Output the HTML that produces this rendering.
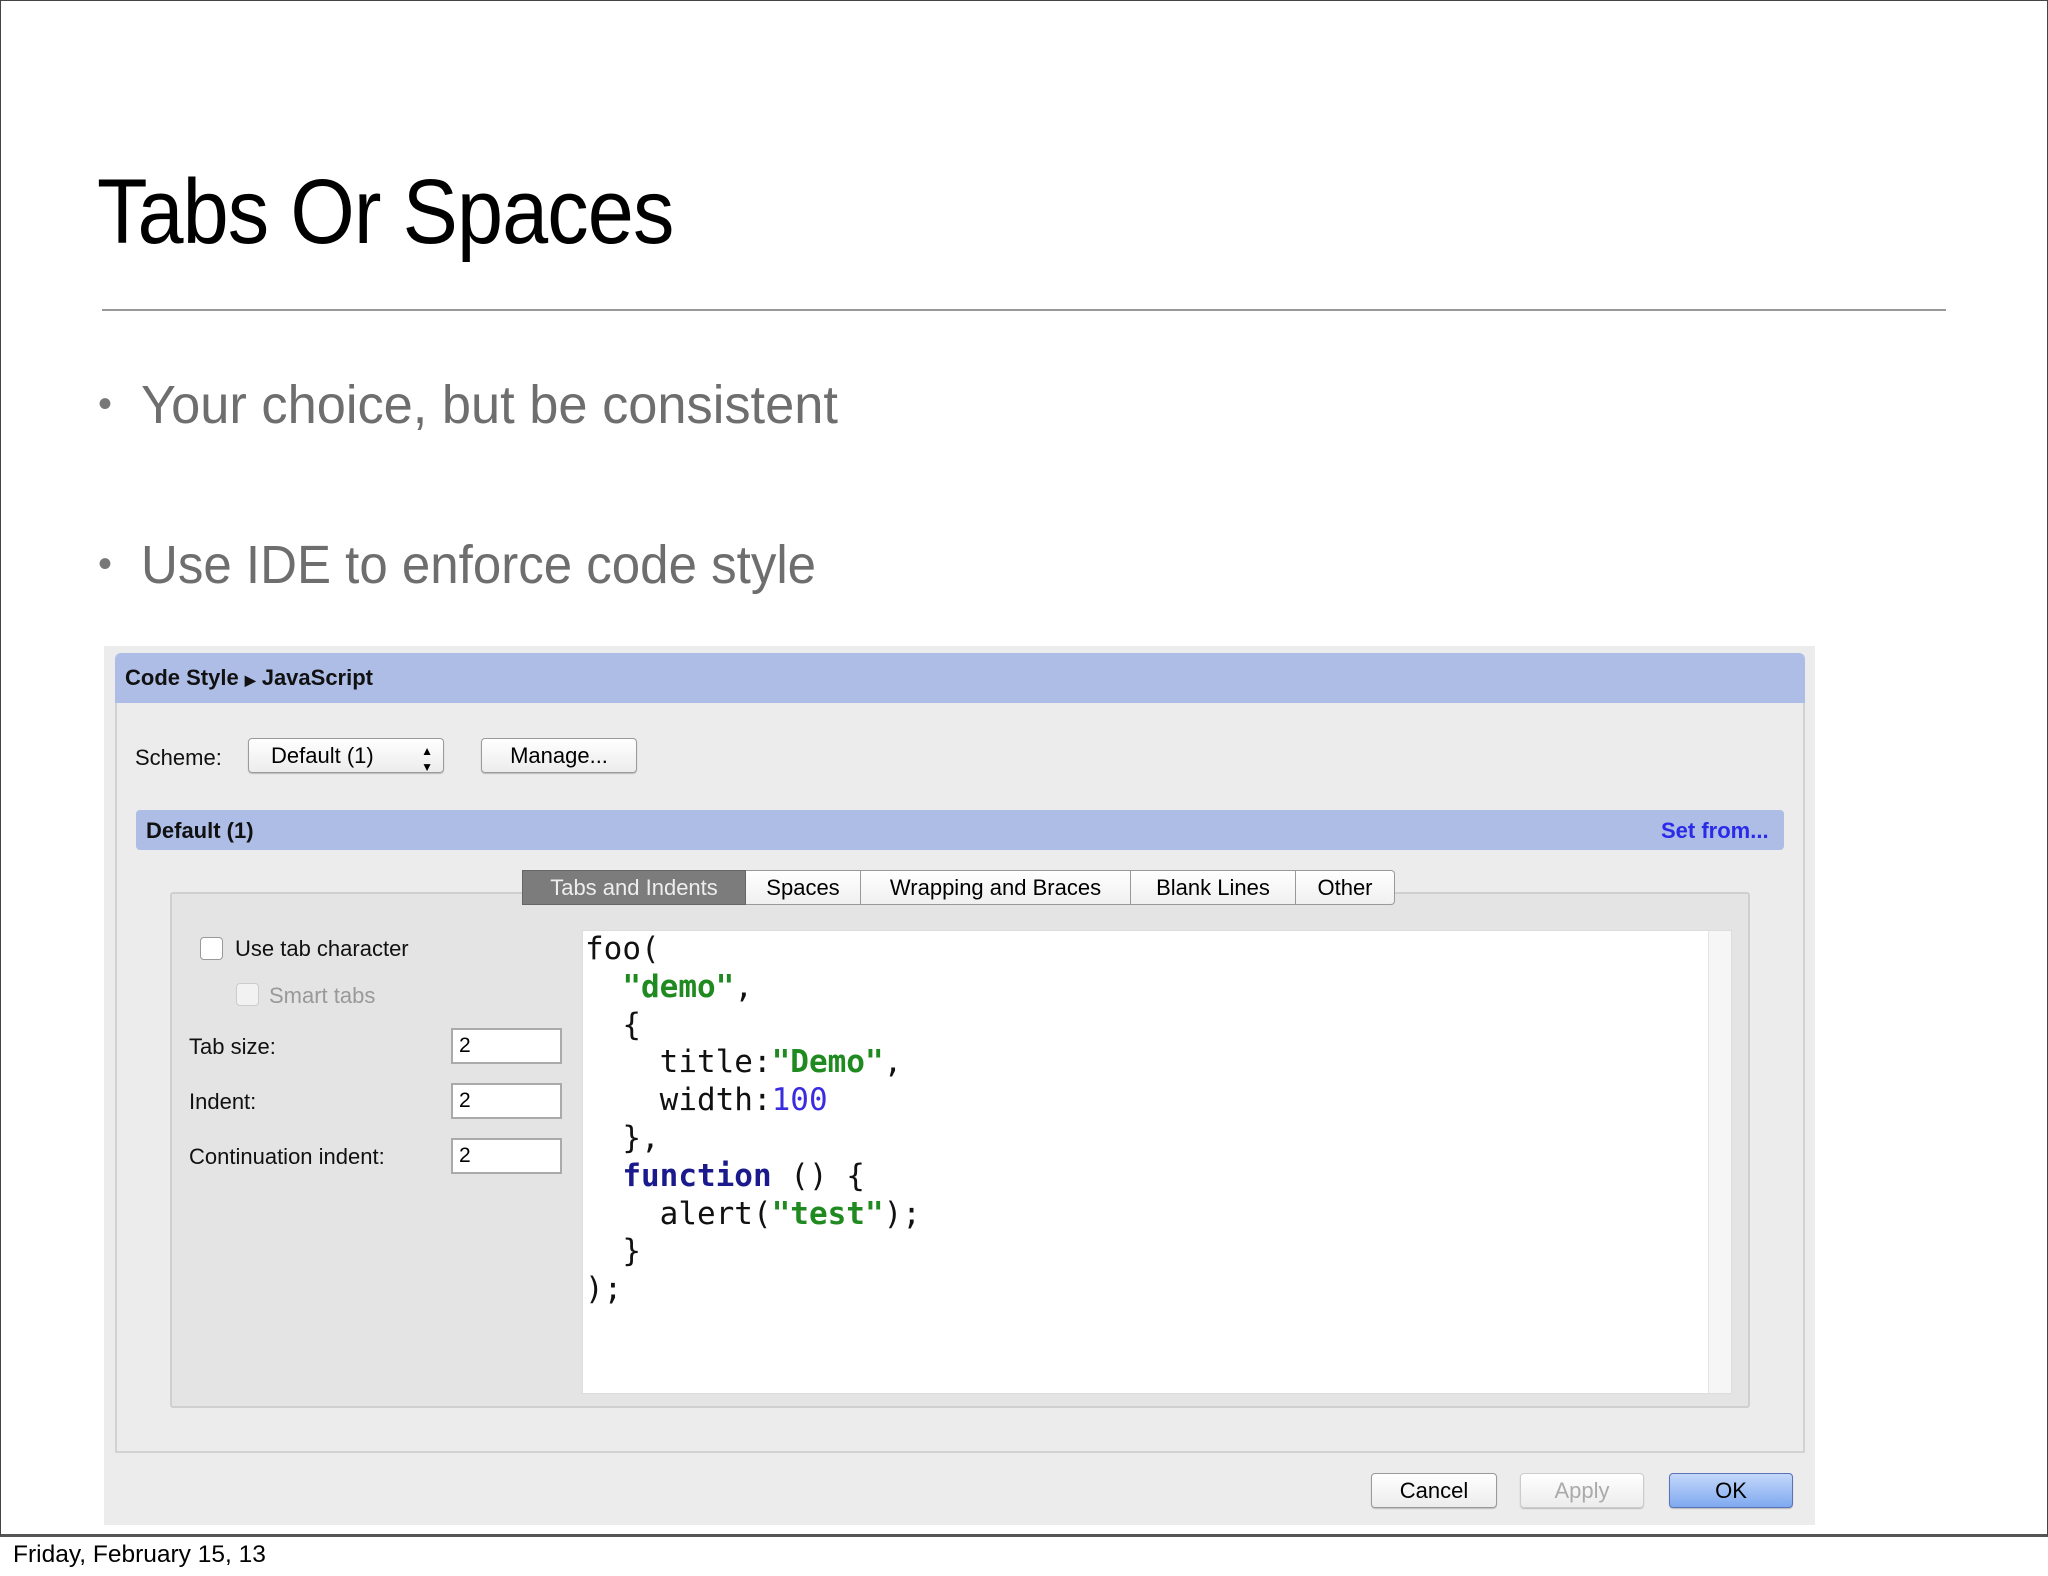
<!DOCTYPE html>
<html><head><meta charset="utf-8">
<style>
*{margin:0;padding:0;box-sizing:border-box}
body{width:2048px;height:1576px;background:#fff;position:relative;overflow:hidden;font-family:"Liberation Sans",sans-serif}
.a{position:absolute}
.slide{left:0;top:0;width:2048px;height:1537px;border:1px solid #444;border-bottom:3px solid #555}
.title{left:97px;top:160px;font-size:92px;color:#000;white-space:nowrap;letter-spacing:-1px;transform:scaleX(0.9);transform-origin:0 0}
.hr{left:102px;top:309px;width:1844px;height:2px;background:#999}
.bul{font-size:54px;color:#6e6e6e;white-space:nowrap;transform:scaleX(0.97);transform-origin:0 0}
.dot{font-size:40px;color:#777}
.dlg{left:104px;top:646px;width:1711px;height:879px;background:#ececec}
.ui{font-size:22px;color:#111;white-space:nowrap}
.band{background:#adbde6}
.btn{background:linear-gradient(#fff,#ececec);border:1px solid #9a9a9a;border-radius:4px;font-size:22px;text-align:center;box-shadow:0 1px 1px #bbb}
.inp{background:#fff;border:2px solid #aaa;font-size:21px;padding-left:6px;line-height:32px}
.code{font-family:"DejaVu Sans Mono",monospace;font-size:31px;line-height:37.8px;white-space:pre;color:#111}
.s{color:#1f8a1f;font-weight:bold}
.k{color:#1a1a8c;font-weight:bold}
.n{color:#3a2de0}
.tab{top:870px;height:35px;border:1px solid #999;border-left:none;background:linear-gradient(#fff,#f0f0f0);font-size:22px;text-align:center;line-height:33px}
</style></head><body>
<div class="a slide"></div>
<div class="a title">Tabs Or Spaces</div>
<div class="a hr"></div>
<div class="a dot" style="left:98px;top:382px">•</div>
<div class="a bul" style="left:141px;top:374px">Your choice, but be consistent</div>
<div class="a dot" style="left:98px;top:542px">•</div>
<div class="a bul" style="left:141px;top:534px;transform:scaleX(0.945)">Use IDE to enforce code style</div>

<div class="a dlg"></div>
<div class="a band" style="left:115px;top:653px;width:1690px;height:50px;border-radius:6px 6px 0 0"></div>
<div class="a ui" style="left:125px;top:665px;font-weight:bold">Code Style <span style="font-size:14px">▶</span> JavaScript</div>
<div class="a" style="left:115px;top:703px;width:1690px;height:750px;border:2px solid #d2d2d2;border-top:none"></div>
<div class="a ui" style="left:135px;top:745px">Scheme:</div>
<div class="a btn" style="left:248px;top:738px;width:196px;height:35px;line-height:33px;text-align:left;padding-left:22px">Default (1)<span style="position:absolute;right:10px;top:0;font-size:12px;line-height:16px;top:4px">▲<br>▼</span></div>
<div class="a btn" style="left:481px;top:738px;width:156px;height:35px;line-height:33px">Manage...</div>
<div class="a band" style="left:136px;top:810px;width:1648px;height:40px;border-radius:4px"></div>
<div class="a ui" style="left:146px;top:818px;font-weight:bold">Default (1)</div>
<div class="a ui" style="left:1661px;top:818px;font-weight:bold;color:#2a2ae8">Set from...</div>

<div class="a" style="left:170px;top:892px;width:1580px;height:516px;border:2px solid #cfcfcf;background:#e4e4e4;border-radius:3px"></div>
<div class="a tab" style="left:522px;width:224px;background:#7c7c7c;color:#eee;border:1px solid #666">Tabs and Indents</div>
<div class="a tab" style="left:746px;width:115px">Spaces</div>
<div class="a tab" style="left:861px;width:270px">Wrapping and Braces</div>
<div class="a tab" style="left:1131px;width:165px">Blank Lines</div>
<div class="a tab" style="left:1296px;width:99px;border-radius:0 4px 4px 0">Other</div>

<div class="a" style="left:200px;top:937px;width:23px;height:23px;border:1px solid #999;border-radius:4px;background:#fff"></div>
<div class="a ui" style="left:235px;top:936px">Use tab character</div>
<div class="a" style="left:236px;top:983px;width:23px;height:23px;border:1px solid #ccc;border-radius:4px;background:#f2f2f2"></div>
<div class="a ui" style="left:269px;top:983px;color:#999">Smart tabs</div>
<div class="a ui" style="left:189px;top:1034px">Tab size:</div>
<div class="a inp" style="left:451px;top:1028px;width:111px;height:36px">2</div>
<div class="a ui" style="left:189px;top:1089px">Indent:</div>
<div class="a inp" style="left:451px;top:1083px;width:111px;height:36px">2</div>
<div class="a ui" style="left:189px;top:1144px">Continuation indent:</div>
<div class="a inp" style="left:451px;top:1138px;width:111px;height:36px">2</div>

<div class="a" style="left:582px;top:930px;width:1150px;height:464px;background:#fff;border:1px solid #ddd"></div>
<div class="a" style="left:1708px;top:931px;width:23px;height:462px;background:#f6f6f6;border-left:1px solid #e4e4e4"></div>
<div class="a code" style="left:585px;top:931px">foo(
  <span class="s">"demo"</span>,
  {
    title:<span class="s">"Demo"</span>,
    width:<span class="n">100</span>
  },
  <span class="k">function</span> () {
    alert(<span class="s">"test"</span>);
  }
);</div>

<div class="a btn" style="left:1371px;top:1473px;width:126px;height:35px;line-height:33px">Cancel</div>
<div class="a btn" style="left:1520px;top:1473px;width:124px;height:35px;line-height:33px;color:#aaa;border-color:#ccc">Apply</div>
<div class="a btn" style="left:1669px;top:1473px;width:124px;height:35px;line-height:33px;background:linear-gradient(#c4d8fb,#7fa9ef);border-color:#5a72b8">OK</div>

<div class="a" style="left:13px;top:1541px;font-size:24.5px;color:#000">Friday, February 15, 13</div>
</body></html>
